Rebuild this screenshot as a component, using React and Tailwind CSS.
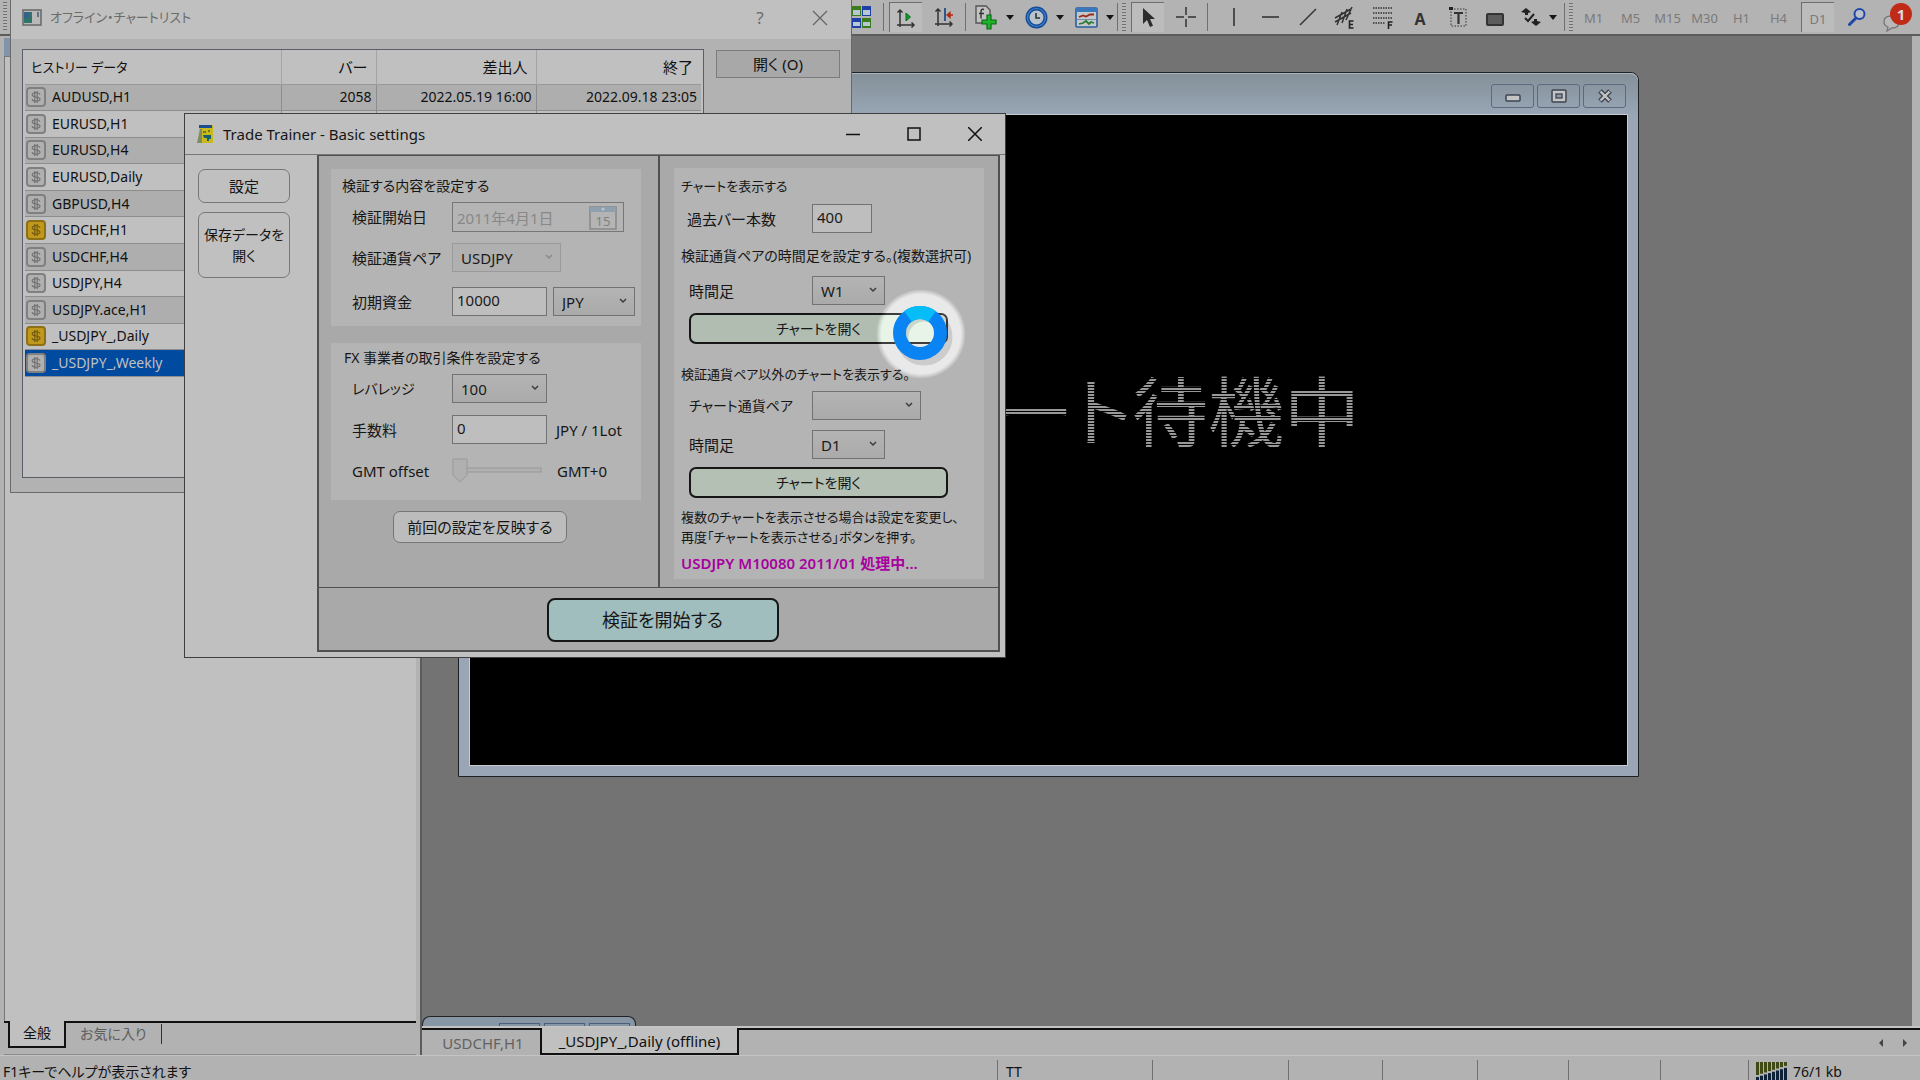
import React, { useState } from "react";

const historyRows = [
  { name: "AUDUSD,H1", bars: "2058", from: "2022.05.19 16:00", to: "2022.09.18 23:05" },
  { name: "EURUSD,H1" },
  { name: "EURUSD,H4" },
  { name: "EURUSD,Daily" },
  { name: "GBPUSD,H4" },
  { name: "USDCHF,H1", gold: true },
  { name: "USDCHF,H4" },
  { name: "USDJPY,H4" },
  { name: "USDJPY.ace,H1" },
  { name: "_USDJPY_,Daily", gold: true },
  { name: "_USDJPY_,Weekly", selected: true },
];

const timeframes = ["M1", "M5", "M15", "M30", "H1", "H4"];

/* ---------- small shared pieces ---------- */

const Separator = () => <span className="h-7 w-px shrink-0 bg-[#707070]" />;

const Grip = () => (
  <span className="h-7 w-1 shrink-0 bg-[repeating-linear-gradient(#707070_0_1px,#b8b8b8_1px_3px)]" />
);

const Caret = () => (
  <svg width="8" height="5" viewBox="0 0 8 5" aria-hidden="true">
    <path d="M0 0h8L4 5z" fill="#151515" />
  </svg>
);

const ToolButton = ({ label, pressed, className = "w-[37px]", children }) => (
  <button
    aria-label={label}
    className={`h-[30px] shrink-0 flex items-center justify-center ${className} ${
      pressed ? "bg-[#bcbcbc] border-l border-t border-[#6e6e6e]" : ""
    }`}
  >
    {children}
  </button>
);

const CoinIcon = ({ gold }) => (
  <svg width="20" height="20" viewBox="0 0 20 20" className="shrink-0" aria-hidden="true">
    <rect x="1" y="1" width="18" height="18" rx="3" fill={gold ? "#c0991c" : "#b0b0b0"} stroke={gold ? "#8d7016" : "#808080"} strokeWidth="2" />
    <path
      d="M14 7.500C13.400 6.200 12 5.800 10 5.800C7.800 5.800 6.200 6.600 6.200 7.900C6.200 10.700 14 9.200 14 12C14 13.400 12.400 14.200 10 14.200C7.800 14.200 6.500 13.600 6 12.300M8.800 4v12M11.200 4v12"
      fill="none"
      stroke={gold ? "#6f5712" : "#6e6e6e"}
      strokeWidth="1.100"
    />
  </svg>
);

const SelectBox = ({ id, value, className, disabled }) => (
  <div className={`relative h-[29px] ${className}`}>
    <select
      id={id}
      defaultValue={value}
      disabled={disabled}
      aria-label={id}
      className={`appearance-none w-full h-full pl-2 pt-px text-[15px] leading-5 border text-[#1a1a1a] opacity-100 ${
        disabled
          ? "border-[#9a9a9a] bg-[#b0b0b0]"
          : "border-[#727272] bg-linear-to-b from-[#b4b4b4] to-[#aaaaaa]"
      }`}
    >
      <option value={value}>{value}</option>
    </select>
    <svg width="8" height="6" viewBox="0 0 8 6" className="absolute right-2 top-[11px] pointer-events-none" aria-hidden="true">
      <path d="M1 1l3 3 3-3" fill="none" stroke={disabled ? "#8a8a8a" : "#3c3c3c"} strokeWidth="1.500" />
    </svg>
  </div>
);

const inputClass = "h-[29px] border border-[#727272] bg-[#bebebe] pl-1 pb-1 text-[15px] leading-5 text-[#1a1a1a]";

/* ---------- top toolbar ---------- */

const Toolbar = () => (
  <header className="h-9 shrink-0 flex items-start bg-[#b3b3b3] border-b-2 border-[#5c5c5c] pt-[2px] overflow-hidden">
    <div className="w-[852px] shrink-0 pl-[3px]">
      <span className="block h-7 w-1 bg-[repeating-linear-gradient(#707070_0_1px,#b8b8b8_1px_3px)]" />
    </div>
    <div className="flex items-center">
      <ToolButton label="ウィンドウの整列" className="w-5">
        <svg width="20" height="22" viewBox="0 0 20 22">
          <path d="M0 0h9v10H0z" fill="#3b7d1d" />
          <path d="M10 0h9v10h-9zM0 12h9v10H0z" fill="#1e3fa8" />
          <path d="M10 12h9v10h-9z" fill="#3b7d1d" />
          <path d="M1 4h7v5H1zM11 4h7v5h-7zM1 16h7v4H1zM11 16h7v4h-7z" fill="#b9c7d2" />
        </svg>
      </ToolButton>
      <span className="w-[11px]" />
      <Separator />
      <span className="w-[5px]" />
      <ToolButton label="自動スクロール" pressed className="w-[33px]">
        <svg width="22" height="22" viewBox="0 0 22 22">
          <path d="M5 3v17M2 18h17M2.500 5.500L5 3l2.500 2.500M16.500 15.500l2.500 2.500-2.500 2.500" fill="none" stroke="#333" strokeWidth="1.500" />
          <path d="M11 6v8l4.500-4z" fill="#0f9a2c" stroke="#0a6a1d" />
        </svg>
      </ToolButton>
      <ToolButton label="チャートシフト" className="w-[43px]">
        <svg width="22" height="22" viewBox="0 0 22 22">
          <path d="M5 3v17M2 18h17M2.500 5.500L5 3l2.500 2.500M16.500 15.500l2.500 2.500-2.500 2.500" fill="none" stroke="#333" strokeWidth="1.500" />
          <path d="M12 2v13" stroke="#1d4f86" strokeWidth="1.800" />
          <path d="M20 9h-4M17 6.500L14 9l3 2.500z" stroke="#b4290f" strokeWidth="1.300" fill="#b4290f" />
        </svg>
      </ToolButton>
      <Separator />
      <ToolButton label="インディケータ" className="w-[51px] gap-2 pl-1">
        <svg width="24" height="26" viewBox="0 0 24 26">
          <path d="M2 2h10l4 4v13H2z" fill="#c2c2c2" stroke="#555" strokeWidth="1.400" />
          <path d="M10 5.500c-3-1-3 1-3 3v6M5 9.500h5" fill="none" stroke="#333" strokeWidth="1.400" />
          <path d="M13 11h4v5h5v4h-5v5h-4v-5H8v-4h5z" fill="#1fb32c" stroke="#0b6a14" strokeWidth="1.200" />
        </svg>
        <Caret />
      </ToolButton>
      <ToolButton label="時間足設定" className="w-[50px] gap-2 pl-1">
        <svg width="23" height="23" viewBox="0 0 23 23">
          <circle cx="11.500" cy="11.500" r="9" fill="#b7c2cc" stroke="#164a96" strokeWidth="4" />
          <circle cx="11.500" cy="11.500" r="9" fill="none" stroke="#3e84cd" strokeWidth="1.200" />
          <path d="M11 7v5h4" fill="none" stroke="#333" strokeWidth="1.600" />
        </svg>
        <Caret />
      </ToolButton>
      <ToolButton label="定型チャート" className="w-[50px] gap-2 pl-1">
        <svg width="23" height="21" viewBox="0 0 23 21">
          <rect x="1" y="1" width="21" height="19" rx="1" fill="#c4c8ca" stroke="#2a5f9e" strokeWidth="1.600" />
          <path d="M1 1h21v4H1z" fill="#3a78bd" />
          <path d="M4 10l4-1.500 3 1 4-2 4 0" fill="none" stroke="#9a2a18" strokeWidth="1.800" />
          <path d="M4 17l4-1 3-2 3 3 2-2 3 1" fill="none" stroke="#2c7a35" strokeWidth="1.800" />
          <path d="M2 12.500h19" stroke="#5a7fa5" strokeWidth="0.800" />
        </svg>
        <Caret />
      </ToolButton>
      <Separator />
      <span className="w-1" />
      <Grip />
      <span className="w-[5px]" />
      <ToolButton label="カーソル" pressed className="w-[33px]">
        <svg width="14" height="22" viewBox="0 0 14 22">
          <path d="M2 1v16l4-4 3 7 3-1.300-3-6.700h5z" fill="#2b2b2b" />
        </svg>
      </ToolButton>
      <ToolButton label="クロスヘア" className="w-[43px]">
        <svg width="20" height="20" viewBox="0 0 20 20">
          <path d="M10 0v8M10 12v8M0 10h8M12 10h8" stroke="#333" strokeWidth="1.500" />
        </svg>
      </ToolButton>
      <Separator />
      <span className="w-[7px]" />
      <ToolButton label="垂直線">
        <svg width="4" height="18" viewBox="0 0 4 18"><path d="M2 0v18" stroke="#333" strokeWidth="1.600" /></svg>
      </ToolButton>
      <ToolButton label="水平線">
        <svg width="17" height="4" viewBox="0 0 17 4"><path d="M0 2h17" stroke="#333" strokeWidth="1.600" /></svg>
      </ToolButton>
      <ToolButton label="トレンドライン">
        <svg width="18" height="18" viewBox="0 0 18 18"><path d="M1 17L17 1" stroke="#333" strokeWidth="1.500" /></svg>
      </ToolButton>
      <ToolButton label="チャネル" className="w-[38px]">
        <svg width="24" height="28" viewBox="0 0 24 28">
          <path d="M2 15L18 6M2 19L18 10M4 22L9 9M9 20L14 6M13 17L19 4" stroke="#333" strokeWidth="1.500" />
          <path d="M20.500 18h-4v7h4M16.500 21.500h3.500" fill="none" stroke="#222" strokeWidth="1.600" />
        </svg>
      </ToolButton>
      <ToolButton label="フィボナッチ">
        <svg width="24" height="28" viewBox="0 0 24 28">
          <path d="M2 5h19M2 10h19M2 15h19M2 20h12" stroke="#333" strokeWidth="1.500" strokeDasharray="1.500 1" />
          <path d="M21.500 19h-4v7M17.500 22h3.500" fill="none" stroke="#222" strokeWidth="1.600" />
        </svg>
      </ToolButton>
      <ToolButton label="テキスト" className="w-[38px]">
        <span className="text-[16px] leading-5 font-bold text-[#333] pt-[3px]">A</span>
      </ToolButton>
      <ToolButton label="テキストラベル">
        <svg width="20" height="22" viewBox="0 0 20 22">
          <rect x="3" y="3" width="15" height="17" fill="none" stroke="#333" strokeDasharray="1.500 1.500" />
          <path d="M1 1h4v3H1z" fill="#222" />
          <path d="M6 7h9M10.500 7v11" stroke="#333" strokeWidth="2.200" />
        </svg>
      </ToolButton>
      <ToolButton label="長方形">
        <span className="mt-1 h-[13px] w-[18px] rounded-[2px] border-2 border-[#333] bg-[#5c5c5c]" />
      </ToolButton>
      <ToolButton label="矢印" className="w-[51px] gap-2">
        <svg width="20" height="20" viewBox="0 0 20 20">
          <path d="M5 1l5 4-3 1v2H4V6L0 5zM15 19l-5-4 3-1v-2h3v2l4 1z" fill="#222" />
          <path d="M4 11l3 3 6-7" fill="none" stroke="#222" strokeWidth="2" />
        </svg>
        <Caret />
      </ToolButton>
      <Separator />
      <span className="w-1" />
      <Grip />
      <span className="w-[2px]" />
      {timeframes.map((tf) => (
        <ToolButton key={tf} label={tf}>
          <span className="pt-1 text-[13px] text-[#7a7a7a]">{tf}</span>
        </ToolButton>
      ))}
      <span className="w-1" />
      <ToolButton label="D1" pressed className="w-[33px]">
        <span className="pt-1 text-[13px] text-[#7a7a7a]">D1</span>
      </ToolButton>
      <ToolButton label="検索" className="w-[45px]">
        <svg width="20" height="20" viewBox="0 0 20 20">
          <circle cx="12.500" cy="7" r="5" fill="#b9c0cc" stroke="#1f47a8" strokeWidth="2" />
          <path d="M9 11l-6.500 6.500" stroke="#1f47a8" strokeWidth="3" strokeLinecap="round" />
        </svg>
      </ToolButton>
      <ToolButton label="通知" className="w-[34px]">
        <span className="relative block w-8 h-[30px]">
          <svg width="32" height="30" viewBox="0 0 32 30">
            <path d="M4 20c0-4 3-6 7-6s8 2 8 6-3 6-7 6l-5 3 1-4c-3-1-4-3-4-5z" fill="#b9b9b9" stroke="#777" strokeWidth="1.300" />
          </svg>
          <span className="absolute right-0 top-px size-[22px] rounded-full bg-[#c22a18] text-[15px] leading-[22px] font-bold text-[#dcdcdc] text-center">
            1
          </span>
        </span>
      </ToolButton>
    </div>
  </header>
);

/* ---------- chart window on the workspace ---------- */

const ChartWindow = () => (
  <section className="absolute left-[36px] top-[36px] w-[1181px] h-[705px] flex flex-col rounded-t-lg border border-[#1d2226] bg-[#9aa6b6] px-[10px] pb-[10px]">
    <div className="-mx-[10px] h-[41px] shrink-0 flex items-center justify-end gap-[3px] px-3 pt-[3px] rounded-t-lg border-t border-[#a9b6bf] bg-linear-to-b from-[#84919a] to-[#98a5b4]">
      <button aria-label="最小化" className="w-[43px] h-6 flex items-center justify-center rounded-[3px] border border-[#5a6a80]">
        <svg width="16" height="14" viewBox="0 0 16 14"><rect x="1" y="6" width="14" height="6" rx="1" fill="#c4c4c4" stroke="#3c4450" strokeWidth="1.500" /></svg>
      </button>
      <button aria-label="最大化" className="w-[43px] h-6 flex items-center justify-center rounded-[3px] border border-[#5a6a80]">
        <svg width="16" height="14" viewBox="0 0 16 14">
          <rect x="1" y="1" width="14" height="12" rx="1" fill="#c4c4c4" stroke="#3c4450" strokeWidth="1.500" />
          <rect x="5" y="5" width="6" height="4" fill="#8d9aab" stroke="#3c4450" strokeWidth="1.300" />
        </svg>
      </button>
      <button aria-label="閉じる" className="w-[43px] h-6 flex items-center justify-center rounded-[3px] border border-[#5a6a80]">
        <svg width="16" height="14" viewBox="0 0 16 14">
          <path d="M3 2l10 10M13 2L3 12" stroke="#3c4450" strokeWidth="5" />
          <path d="M3.500 2.500l9 9M12.500 2.500l-9 9" stroke="#c4c4c4" strokeWidth="2.400" />
        </svg>
      </button>
    </div>
    <div className="flex-1 border border-[#c8ccd0] bg-black flex items-start justify-end overflow-hidden">
      <p className="mt-[240px] mr-[267px] text-[76px] leading-[114px] whitespace-nowrap text-transparent bg-clip-text bg-[repeating-linear-gradient(#989898_0_2px,#000_2px_3px)]">
        ート待機中
      </p>
    </div>
  </section>
);

/* ---------- offline chart list ---------- */

const OfflineDialog = () => (
  <section className="absolute left-[10px] top-0 w-[842px] h-[493px] flex flex-col bg-[#b2b2b2] border-x border-b border-[#6a6a6a]">
    <div className="h-[39px] shrink-0 flex items-center bg-[#c0c0c0] pl-[11px] pr-px pb-1 text-[#6b6b6b]">
      <svg width="20" height="17" viewBox="0 0 20 17" aria-hidden="true">
        <rect x="1" y="1" width="18" height="15" fill="#b9b9b9" stroke="#6c6c6c" strokeWidth="1.600" />
        <path d="M2 3h8v11H2z" fill="#2f7468" />
        <path d="M2 3h5v6H2z" fill="#35618a" />
        <path d="M16 3v5" stroke="#54758f" strokeWidth="2" />
      </svg>
      <h2 className="ml-2 flex-1 text-[13px]">オフライン・チャートリスト</h2>
      <button aria-label="ヘルプ" className="w-[60px] text-[17px]">?</button>
      <button aria-label="閉じる" className="w-[60px] flex justify-center">
        <svg width="16" height="16" viewBox="0 0 16 16"><path d="M1 1l14 14M15 1L1 15" stroke="#666" strokeWidth="1.300" /></svg>
      </button>
    </div>
    <div className="flex-1 flex gap-3 pt-[10px] pb-[14px] pl-[11px] pr-[11px]">
      <div className="flex-1 border border-[#5a5e66] bg-[#c0c0c0] pl-[2px] pr-[2px]">
        <table className="w-full h-[327px] table-fixed border-collapse text-[14px] leading-5 text-[#111]">
          <colgroup>
            <col className="w-[256px]" />
            <col className="w-[95px]" />
            <col className="w-[160px]" />
            <col />
          </colgroup>
          <thead>
            <tr className="h-[34px] border-b border-[#999] text-[15px]">
              <th className="pl-[6px] text-left text-[13px] font-normal border-r border-[#a5a5a5]">ヒストリー データ</th>
              <th className="pr-2 text-right font-normal border-r border-[#a5a5a5]">バー</th>
              <th className="pr-2 text-right font-normal border-r border-[#a5a5a5]">差出人</th>
              <th className="pr-2 text-right font-normal">終了</th>
            </tr>
          </thead>
          <tbody>
            {historyRows.map((row, i) => (
              <tr
                key={row.name}
                className={`border-b border-[#8d8d8d] ${
                  row.selected ? "bg-[#004a9f] text-[#c0c0c0]" : i % 2 === 0 ? "bg-[#aeaeae]" : "bg-[#c0c0c0]"
                }`}
              >
                <td className="pl-px border-r border-[#8d8d8d]">
                  <span className="flex items-center gap-[6px]">
                    <CoinIcon gold={row.gold} />
                    {row.name}
                  </span>
                </td>
                <td className="pr-1 text-right border-r border-[#8d8d8d]">{row.bars}</td>
                <td className="pr-1 text-right border-r border-[#8d8d8d]">{row.from}</td>
                <td className="pr-1 text-right">{row.to}</td>
              </tr>
            ))}
          </tbody>
        </table>
      </div>
      <button className="mt-px h-7 w-[124px] border border-[#7c7c7c] bg-[#a8a8a8] text-[15px] leading-5 text-[#111]">開く (O)</button>
    </div>
  </section>
);

/* ---------- Trade Trainer window ---------- */

const Row = ({ id, label, className, labelClass = "w-[100px] text-[15px]", children }) => (
  <div className={`flex items-center ${className}`}>
    <label htmlFor={id} className={`shrink-0 leading-5 ${labelClass}`}>
      {label}
    </label>
    {children}
  </div>
);

const TrainerDialog = () => {
  const [bars, setBars] = useState("400");
  const [funds, setFunds] = useState("10000");
  const [fee, setFee] = useState("0");

  return (
    <section className="absolute left-[184px] top-[113px] w-[822px] border border-[#3f3f3f] bg-[#c0c0c0] text-[#161616]">
      <div className="h-10 flex items-center pl-3">
        <svg width="18" height="20" viewBox="0 0 18 20" aria-hidden="true">
          <path d="M2 1h14v18H3z" fill="#c9b91f" />
          <path d="M2 1h13v3H2z" fill="#1c4f90" />
          <path d="M0 19h5V5H3z" fill="#7f8d5a" />
          <path d="M6 7h3v2H6zM11 6h2v2h-2z" fill="#6c7a1a" />
          <path d="M6 11h8v4h-2v2h-2v-3H7z" fill="#17616f" />
        </svg>
        <h1 className="ml-2 flex-1 text-[15px]">Trade Trainer - Basic settings</h1>
        <button aria-label="最小化" className="w-[60px] flex justify-center">
          <svg width="14" height="14" viewBox="0 0 14 14"><path d="M0 7.500h14" stroke="#111" strokeWidth="1.500" /></svg>
        </button>
        <button aria-label="最大化" className="w-[61px] flex justify-center">
          <svg width="14" height="14" viewBox="0 0 14 14"><rect x="1" y="1" width="12" height="12" fill="none" stroke="#111" strokeWidth="1.500" /></svg>
        </button>
        <button aria-label="閉じる" className="w-[61px] flex justify-center">
          <svg width="14" height="14" viewBox="0 0 14 14"><path d="M0 0l14 14M14 0L0 14" stroke="#111" strokeWidth="1.500" /></svg>
        </button>
      </div>

      <div className="flex border-t border-[#777] pr-[5px] pb-[5px]">
        <nav className="w-[132px] shrink-0 flex flex-col items-start gap-[9px] pt-[14px] pl-[13px]">
          <button className="h-[34px] w-[92px] rounded-[7px] border border-[#777] text-[15px] leading-5">設定</button>
          <button className="h-[66px] w-[92px] rounded-[7px] border border-[#777] text-[14px] leading-[21px]">
            保存データを
            <br />
            開く
          </button>
        </nav>

        <div className="flex-1 min-w-0 border-x-2 border-b-2 border-t border-[#505050] bg-[#a9a9a9]">
          <div className="flex border-b border-[#505050]">
            {/* verification settings */}
            <div className="w-[339px] shrink-0 pt-[13px] pl-3 pr-[17px] pb-11">
              <div className="bg-[#b4b4b4] pt-2 pb-[10px] pl-[21px]">
                <h3 className="-ml-[10px] text-[14px] leading-[18px]">検証する内容を設定する</h3>
                <Row id="start-date" label="検証開始日" className="mt-[7px]">
                  <div className="relative w-[172px]">
                    <input
                      id="start-date"
                      disabled
                      value="2011年4月1日"
                      readOnly
                      className="w-full h-[30px] border border-[#777] bg-transparent pl-1 pr-10 text-[15px] leading-5 text-[#888]"
                    />
                    <svg width="28" height="24" viewBox="0 0 28 24" className="absolute right-[7px] top-1" aria-hidden="true">
                      <rect x="1" y="1" width="26" height="22" fill="#b4b4b4" stroke="#888" strokeWidth="1.500" />
                      <path d="M1 1h26v5H1z" fill="#8e9fb0" />
                      <circle cx="14" cy="3" r="1.500" fill="#c4c4c4" />
                      <text x="14" y="20" textAnchor="middle" fontSize="13" fill="#808080">15</text>
                    </svg>
                  </div>
                </Row>
                <Row id="pair" label="検証通貨ペア" className="mt-[11px]">
                  <SelectBox id="pair" value="USDJPY" disabled className="w-[109px]" />
                </Row>
                <Row id="funds" label="初期資金" className="mt-[15px]">
                  <input id="funds" value={funds} onChange={(e) => setFunds(e.target.value)} className={`w-[95px] ${inputClass}`} />
                  <SelectBox id="currency" value="JPY" className="ml-[6px] w-[82px]" />
                </Row>
              </div>

              <div className="mt-[17px] bg-[#b4b4b4] pt-[6px] pb-[14px] pl-[21px]">
                <h3 className="-ml-2 text-[14px] leading-[18px]">FX 事業者の取引条件を設定する</h3>
                <Row id="leverage" label="レバレッジ" className="mt-[7px]" labelClass="w-[100px] text-[14px]">
                  <SelectBox id="leverage" value="100" className="w-[95px]" />
                </Row>
                <Row id="fee" label="手数料" className="mt-3">
                  <input id="fee" value={fee} onChange={(e) => setFee(e.target.value)} className={`w-[95px] ${inputClass}`} />
                  <span className="ml-[9px] text-[15px] leading-5">JPY / 1Lot</span>
                </Row>
                <Row id="gmt" label="GMT offset" className="mt-3 h-[30px]">
                  <div className="relative w-[95px] h-[26px]">
                    <svg width="90" height="26" viewBox="0 0 90 26" aria-hidden="true">
                      <rect x="4" y="10" width="85" height="4" fill="#b0b0b0" stroke="#999" />
                      <path d="M1 1h14v16l-7 7-7-7z" fill="#b0b0b0" stroke="#999" />
                    </svg>
                    <input
                      id="gmt"
                      type="range"
                      min="0"
                      max="12"
                      defaultValue="0"
                      disabled
                      className="absolute inset-0 w-[90px] appearance-none bg-transparent [&::-webkit-slider-thumb]:appearance-none"
                    />
                  </div>
                  <span className="ml-[10px] text-[15px] leading-5">GMT+0</span>
                </Row>
              </div>

              <button className="mt-[11px] ml-[62px] h-8 w-[174px] rounded-[7px] border border-[#777] bg-[#bcbcbc] text-[15px] leading-5">
                前回の設定を反映する
              </button>
            </div>

            {/* chart display settings */}
            <div className="flex-1 min-w-0 border-l-2 border-[#505050] pt-3 pl-[14px] pr-[14px] pb-2">
              <div className="bg-[#b4b4b4] pt-[9px] pb-[6px] pl-[7px] whitespace-nowrap text-[13px]">
                <h3 className="leading-[18px]">チャートを表示する</h3>
                <Row id="bars" label="過去バー本数" className="mt-[9px]" labelClass="w-[131px] pl-[6px] text-[15px]">
                  <input id="bars" value={bars} onChange={(e) => setBars(e.target.value)} className={`w-[60px] ${inputClass}`} />
                </Row>
                <p className="mt-[14px] text-[14px] leading-[18px]">検証通貨ペアの時間足を設定する。(複数選択可)</p>
                <Row id="tf-main" label="時間足" className="mt-[11px]" labelClass="w-[131px] pl-2 text-[15px]">
                  <SelectBox id="tf-main" value="W1" className="w-[73px]" />
                </Row>
                <button className="mt-2 ml-2 block h-[31px] w-[259px] rounded-[7px] border-2 border-[#161616] bg-[#b1bdb1] text-[14px] leading-5">
                  チャートを開く
                </button>
                <p className="mt-[21px] leading-[18px]">検証通貨ペア以外のチャートを表示する。</p>
                <Row id="other-pair" label="チャート通貨ペア" className="mt-2" labelClass="w-[131px] pl-2 text-[14px]">
                  <SelectBox id="other-pair" value="" className="w-[109px]" />
                </Row>
                <Row id="tf-other" label="時間足" className="mt-[10px]" labelClass="w-[131px] pl-2 text-[15px]">
                  <SelectBox id="tf-other" value="D1" className="w-[73px]" />
                </Row>
                <button className="mt-2 ml-2 block h-[31px] w-[259px] rounded-[7px] border-2 border-[#161616] bg-[#b3c0b3] text-[14px] leading-5">
                  チャートを開く
                </button>
                <p className="mt-[9px] leading-5">
                  複数のチャートを表示させる場合は設定を変更し、
                  <br />
                  再度「チャートを表示させる」ボタンを押す。
                </p>
                <p className="mt-[6px] text-[15px] leading-5 font-semibold text-[#a8009f]">USDJPY M10080 2011/01 処理中...</p>
              </div>
            </div>
          </div>

          <div className="flex justify-center pt-[10px] pb-2 pl-2">
            <button className="h-11 w-[232px] rounded-[8px] border-2 border-[#161616] bg-[#a1bebe] text-[18px] leading-6">
              検証を開始する
            </button>
          </div>
        </div>
      </div>
    </section>
  );
};

/* busy pointer with its spotlight */
const BusyPointer = () => (
  <div className="absolute left-[876px] top-[289px] size-[90px] pointer-events-none">
    <div className="absolute inset-0 rounded-full bg-white/15 backdrop-brightness-[1.28] [mask-image:radial-gradient(closest-side,#000_88%,transparent)]" />
    <svg width="90" height="90" viewBox="0 0 90 90" className="relative" aria-hidden="true">
      <circle cx="48" cy="48" r="22" fill="none" stroke="#000" strokeOpacity="0.120" strokeWidth="13" />
      <circle cx="44" cy="44" r="20.500" fill="none" stroke="#0a84f2" strokeWidth="13" />
      <path d="M32 27.400A20.500 20.500 0 0 1 56 27.400" fill="none" stroke="#06bdf8" strokeWidth="13" />
    </svg>
  </div>
);

/* ---------- page ---------- */

const App = () => (
  <div className="relative h-screen flex flex-col overflow-hidden bg-[#b2b2b2] text-[#111] font-['Noto_Sans','Noto_Sans_CJK_JP',sans-serif] [font-feature-settings:'palt']">
    <Toolbar />

    <div className="flex-1 min-h-0 flex">
      {/* navigator */}
      <aside className="w-[422px] shrink-0 flex flex-col border-r-2 border-[#5c5c5c] pl-1 pr-1">
        <div className="mt-[2px] h-[18px] bg-[#8295a8]" />
        <div className="flex-1 border-l border-t border-[#777] bg-[#c0c0c0]" />
        <div className="h-[34px] flex items-start border-b border-[#8a8a8a] text-[14px]">
          <span className="w-1 border-t-2 border-[#111]" />
          <button className="h-[27px] w-[58px] pb-[2px] border-x-2 border-b-2 border-[#111] bg-[#c0c0c0]">全般</button>
          <div className="flex-1 flex items-center border-t-2 border-[#111] pt-px">
            <button className="px-[14px] leading-5 text-[#5e5e5e]">お気に入り</button>
            <span className="h-5 w-px bg-[#333]" />
          </div>
        </div>
      </aside>

      <main className="flex-1 min-w-0 flex flex-col">
        <div className="relative flex-1 mr-2 bg-[#737373] overflow-hidden">
          <ChartWindow />
          <div className="absolute left-0 bottom-0 h-[10px] w-[214px] flex items-end justify-end gap-1 pr-[5px] rounded-t-lg border-x border-t border-[#222] bg-[#8796a4]">
            <span className="h-[3px] w-[41px] border-x border-t border-[#4b5f7c]" />
            <span className="h-[3px] w-[41px] border-x border-t border-[#4b5f7c]" />
            <span className="h-[3px] w-[41px] border-x border-t border-[#4b5f7c]" />
          </div>
        </div>
        <div className="h-[29px] shrink-0 flex border-t-2 border-[#c4c4c4] text-[15px] leading-5">
          <button className="w-[118px] pl-1 border-t-2 border-[#111] text-[#626262]">USDCHF,H1</button>
          <button className="h-[27px] w-[199px] pt-px border-x-2 border-b-2 border-[#111] bg-[#c0c0c0]">_USDJPY_,Daily (offline)</button>
          <div className="flex-1 flex items-center justify-end gap-[18px] pr-3 border-t-2 border-[#111]">
            <button aria-label="前のタブ">
              <svg width="6" height="8" viewBox="0 0 6 8"><path d="M5 0v8L1 4z" fill="#444" /></svg>
            </button>
            <button aria-label="次のタブ">
              <svg width="6" height="8" viewBox="0 0 6 8"><path d="M1 0v8l4-4z" fill="#444" /></svg>
            </button>
          </div>
        </div>
      </main>
    </div>

    <footer className="h-[25px] shrink-0 flex items-end border-t border-[#c4c4c4] bg-[#b2b2b2] text-[14px] leading-[18px] whitespace-nowrap overflow-hidden">
      <span className="flex-1 pl-[3px] -mb-px">F1キーでヘルプが表示されます</span>
      <span className="w-[155px] h-5 border-l border-[#707070] pl-2 pt-[3px]">TT</span>
      <span className="w-[136px] h-5 border-l border-[#707070]" />
      <span className="w-[94px] h-5 border-l border-[#707070]" />
      <span className="w-[95px] h-5 border-l border-[#707070]" />
      <span className="w-[91px] h-5 border-l border-[#707070]" />
      <span className="w-[92px] h-5 border-l border-[#707070]" />
      <span className="w-[88px] h-5 border-l border-[#707070]" />
      <div className="w-[172px] h-5 flex items-start gap-[5px] border-l border-[#707070] pl-[7px] pt-[2px]">
        <svg width="32" height="18" viewBox="0 0 32 18" aria-hidden="true">
          {[0, 1, 2, 3, 4, 5, 6, 7].map((n) => (
            <g key={n}>
              <rect x={n * 4} y="0" width="3" height={13 - n * 1.3} fill="#3f4a14" />
              <rect x={n * 4} y={15 - n * 1.3} width="3" height="18" fill="#0f2338" />
            </g>
          ))}
        </svg>
        <span className="pt-px">76/1 kb</span>
      </div>
    </footer>

    <OfflineDialog />
    <TrainerDialog />
    <BusyPointer />
  </div>
);

export default App;
